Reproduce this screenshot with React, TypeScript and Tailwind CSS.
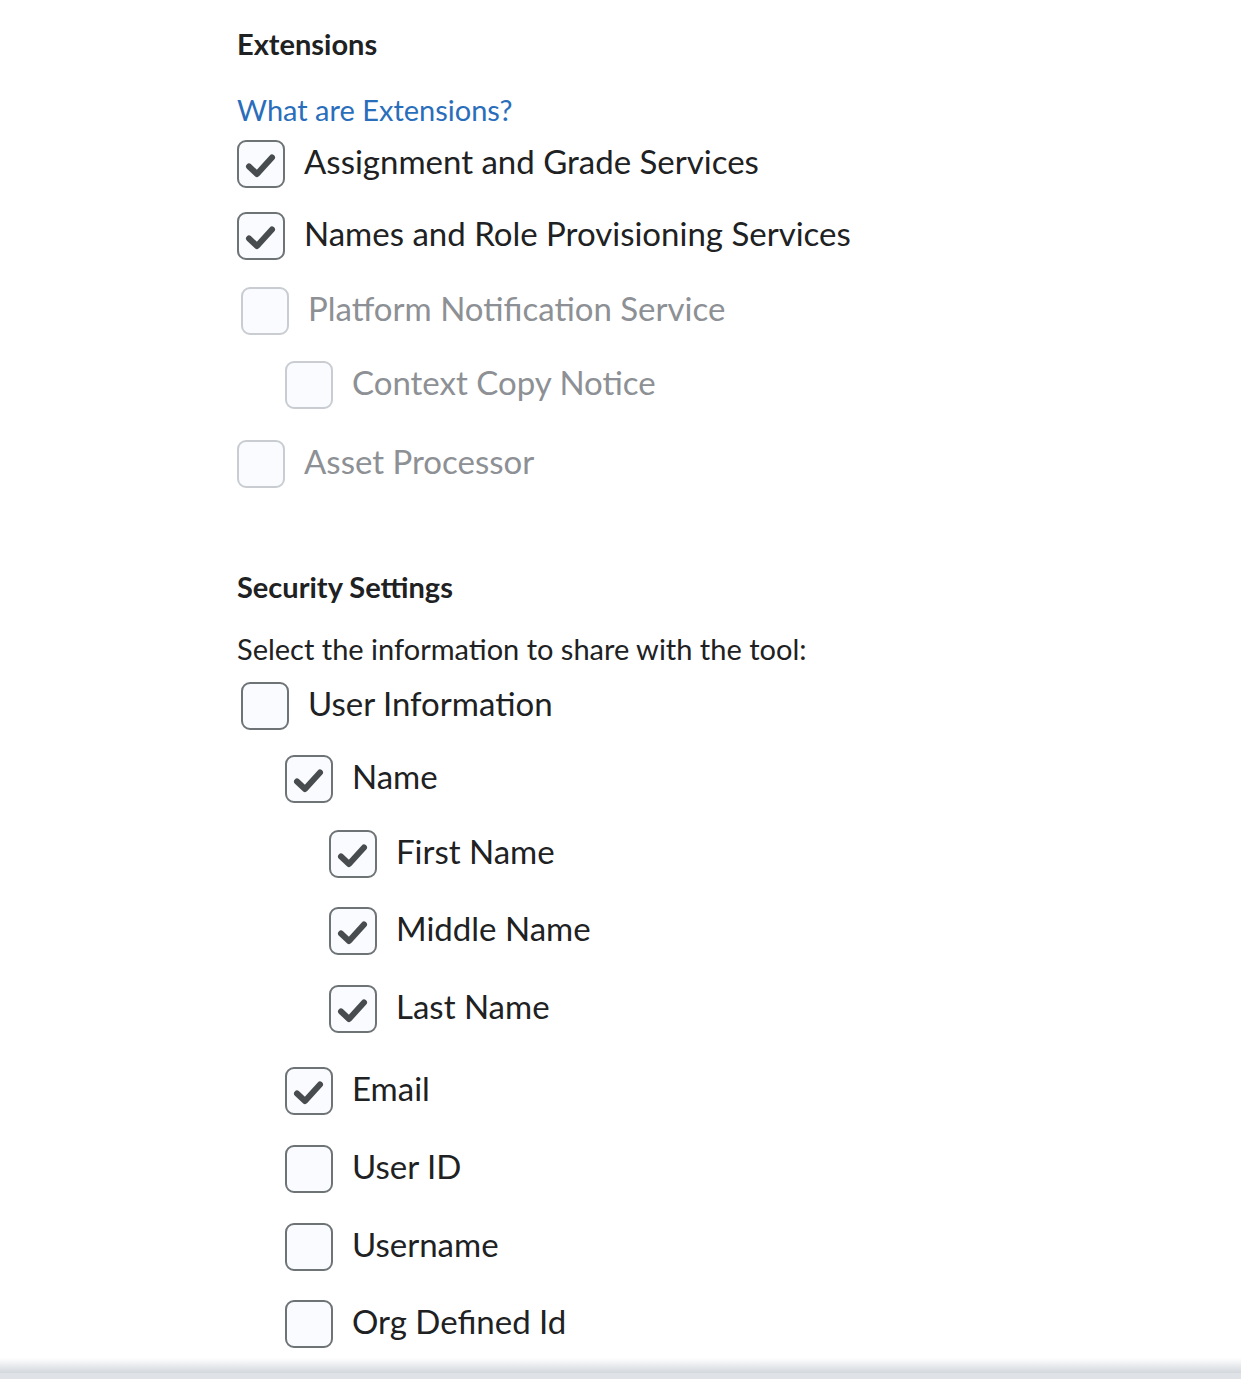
const CHECK = "M12 26.5 L20 34 L35 17.5";

type Item = {
  label: string;
  checked?: boolean;
  disabled?: boolean;
  indent: string;
  mt: string;
};

const extensions: Item[] = [
  { label: "Assignment and Grade Services", checked: true, indent: "ml-0", mt: "mt-[12px]" },
  { label: "Names and Role Provisioning Services", checked: true, indent: "ml-0", mt: "mt-[24px]" },
  { label: "Platform Notification Service", disabled: true, indent: "ml-[4px]", mt: "mt-[27px]" },
  { label: "Context Copy Notice", disabled: true, indent: "ml-[48px]", mt: "mt-[26px]" },
  { label: "Asset Processor", disabled: true, indent: "ml-0", mt: "mt-[31px]" },
];

const security: Item[] = [
  { label: "User Information", indent: "ml-[4px]", mt: "mt-[15px]" },
  { label: "Name", checked: true, indent: "ml-[48px]", mt: "mt-[25px]" },
  { label: "First Name", checked: true, indent: "ml-[92px]", mt: "mt-[27px]" },
  { label: "Middle Name", checked: true, indent: "ml-[92px]", mt: "mt-[29px]" },
  { label: "Last Name", checked: true, indent: "ml-[92px]", mt: "mt-[30px]" },
  { label: "Email", checked: true, indent: "ml-[48px]", mt: "mt-[34px]" },
  { label: "User ID", indent: "ml-[48px]", mt: "mt-[30px]" },
  { label: "Username", indent: "ml-[48px]", mt: "mt-[30px]" },
  { label: "Org Defined Id", indent: "ml-[48px]", mt: "mt-[29px]" },
];

function CheckRow({ item }: { item: Item }) {
  return (
    <label className={`flex h-12 items-center gap-[19px] ${item.indent} ${item.mt}`}>
      <span
        className={`flex h-12 w-12 shrink-0 items-center justify-center rounded-[9px] border-2 bg-[#f9fbff] ${
          item.disabled ? "border-[#c9cdd1]" : "border-[#6e7376]"
        }`}
      >
        {item.checked && (
          <svg width="48" height="48" viewBox="0 0 48 48" className="-m-[2px]">
            <path
              d={CHECK}
              fill="none"
              stroke="#494c4e"
              strokeWidth="6"
              strokeLinecap="round"
              strokeLinejoin="round"
            />
          </svg>
        )}
      </span>
      <span
        className={`pb-[6px] text-[33px] leading-none whitespace-nowrap ${
          item.disabled ? "text-[#8d9094]" : "text-[#202122]"
        }`}
      >
        {item.label}
      </span>
    </label>
  );
}

export default function App() {
  return (
    <div className="flex h-[1379px] flex-col bg-white font-['Lato','Liberation_Sans',sans-serif] text-[#202122]">
      <main className="ml-[237px] flex-1 pt-[28px]">
        {/* Extensions */}
        <h2 className="text-[29px] leading-8 font-bold">Extensions</h2>
        <a href="#" className="mt-[32px] block w-fit text-[29px] leading-9 text-[#2a6ebb]">
          What are Extensions?
        </a>
        {extensions.map((item) => (
          <CheckRow key={item.label} item={item} />
        ))}

        {/* Security Settings */}
        <h2 className="mt-[83px] text-[29px] leading-8 font-bold">Security Settings</h2>
        <p className="mt-[28px] text-[29px] leading-9">Select the information to share with the tool:</p>
        {security.map((item) => (
          <CheckRow key={item.label} item={item} />
        ))}
      </main>
      <div className="h-[15px] bg-gradient-to-b from-white to-[#d3d8dd]" />
      <div className="h-[6px] bg-[#dfe3e8]" />
    </div>
  );
}
